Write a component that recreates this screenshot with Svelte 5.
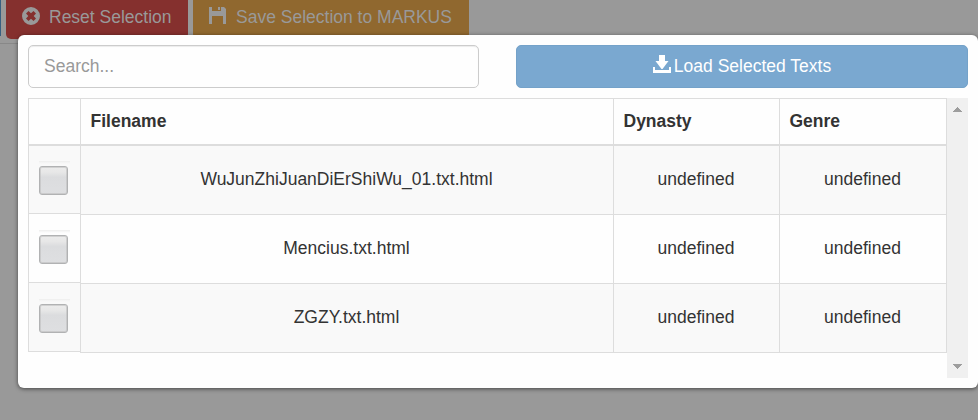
<script>
  const files = ['WuJunZhiJuanDiErShiWu_01.txt.html', 'Mencius.txt.html', 'ZGZY.txt.html'];
</script>

<div class="page">
  <div class="toolbar">
    <span class="btn blue"></span>
    <span class="btn red">
      <svg width="18" height="18" viewBox="0 0 18 18"><path fill-rule="evenodd" d="M9 0a9 9 0 1 0 0 18A9 9 0 0 0 9 0ZM6.500 4 9 6.300 11.500 4 14 6.500 11.700 9 14 11.500 11.500 14 9 11.700 6.500 14 4 11.500 6.300 9 4 6.500Z" /></svg>
      <span>Reset Selection</span>
    </span>
    <span class="btn orange">
      <svg width="17" height="17" viewBox="0 0 17 17"><path d="M0 0h3v4h9V0h3l2 2v15h-3V9H3v8H0ZM9 0h2v3H9Z" /></svg>
      <span>Save Selection to MARKUS</span>
    </span>
  </div>

  <div class="modal">
    <div class="controls">
      <input type="text" placeholder="Search..." />
      <button>
        <svg width="18" height="18" viewBox="0 0 18 18"><path d="M6 0h6v6h3.500L9.500 14h-1L2.500 6H6ZM0 12h2v3h14v-3h2v6H0Z" /></svg>
        <span>Load Selected Texts</span>
      </button>
    </div>
    <div class="scroller">
      <div class="checks">
        <div class="head"></div>
        {#each files as file}
          <label class="check" aria-label={file}><span class="strip"><i></i></span></label>
        {/each}
      </div>
      <div class="table">
        <div class="row head"><b>Filename</b><b>Dynasty</b><b>Genre</b></div>
        {#each files as file}
          <div class="row"><span>{file}</span><span>undefined</span><span>undefined</span></div>
        {/each}
      </div>
      <div class="bar">
        <svg width="9" height="5" viewBox="0 0 9 5" shape-rendering="crispEdges"><path d="M4 0h1v1h1v1h1v1h1v1h1v1H0V4h1V3h1V2h1V1h1Z" /></svg>
        <svg width="9" height="5" viewBox="0 0 9 5" shape-rendering="crispEdges"><path d="M0 0h9v1H8v1H7v1H6v1H5v1H4V4H3V3H2V2H1V1H0Z" /></svg>
      </div>
    </div>
  </div>
</div>

<style>
  :global(body) { overflow: hidden; }
  * { box-sizing: border-box; }
  .page {
    width: 978px; height: 420px; overflow: hidden; position: relative;
    background: #999;
    font: 17.5px/25px "Liberation Sans", Arial, sans-serif; color: #333;
  }
  .toolbar { display: flex; align-items: flex-start; height: 44px; border-bottom: 1px solid #888; }
  .btn { display: flex; height: 39px; color: #999; white-space: nowrap; border-radius: 0 0 5px 5px; }
  .btn svg { flex: none; fill: #999; }
  .blue { width: 1px; height: 36px; margin-right: 5px; background: #385f80; border-radius: 0; }
  .red { width: 182px; margin-right: 5px; padding: 5px 0 0 16px; background: #85302e; }
  .red svg { margin: 2px 9px 0 0; }
  .orange { width: 276px; padding: 5px 0 0 16px; background: #90682f; }
  .orange svg { margin: 2px 10px 0 0; }
  .modal {
    position: absolute; left: 18px; top: 35px; width: 960px; height: 353px; padding: 10px;
    background: #fefefe; border-radius: 6px; box-shadow: 0 1px 4px rgba(0, 0, 0, .55);
  }
  .controls { display: flex; justify-content: space-between; height: 43px; margin-bottom: 10px; }
  input {
    width: 451px; height: 43px; padding: 0 15px; border: 1px solid #ccc; border-radius: 5px;
    background: #fefefe; font: inherit; box-shadow: inset 0 1px 1px rgba(0, 0, 0, .075);
  }
  input::placeholder { color: #999; opacity: 1; }
  button {
    display: flex; justify-content: center; align-items: center; gap: 3px; width: 452px; padding: 0;
    border: 1px solid #74a2c9; border-radius: 5px; background: #7aa8d0; color: #fff; font: inherit;
  }
  button svg { fill: #fff; margin-top: -5px; }
  .scroller { display: flex; align-items: flex-start; height: 280px; }
  .checks { width: 52px; border-left: 1px solid #ddd; }
  .head { height: 48px; border-top: 1px solid #ddd; border-bottom: 2px solid #ddd; }
  .check { display: flex; justify-content: flex-start; height: 69px; padding: 16px 0 0 10px; border-bottom: 1px solid #ddd; }
  .check:nth-child(2) { height: 68px; padding-top: 15px; }
  .check:nth-child(even), .row:nth-child(even) { background: #f9f9f9; }
  .strip {
    width: 31px; height: 42px; padding-top: 5px;
    background: linear-gradient(#ededec, #f3f3f3 1px, rgba(250, 250, 250, 0) 3px);
  }
  .strip i {
    display: block; width: 29px; height: 29px; border: 1px solid #b1b2b3; border-radius: 3px;
    background: linear-gradient(#ececec 0, #e7e7e7 20%, #dbdcde 38%, #dedfe1 100%);
    box-shadow: inset 0 0 0 1px #b9baba88;
  }
  .table { width: 867px; border-right: 1px solid #ddd; }
  .row { display: grid; grid-template-columns: 533px 166px 167px; height: 69px; border-bottom: 1px solid #ddd; }
  .row > * { border-left: 1px solid #ddd; }
  .row > span { padding: 21px 1px 0 0; text-align: center; }
  .row.head { height: 48px; border-bottom-width: 2px; }
  .row b { padding: 10px 9.500px; }
  .bar {
    display: flex; flex-direction: column; justify-content: space-between; align-items: center;
    width: 21px; height: 280px; padding: 9px 0; background: #f0f0f0;
  }
  .bar svg { fill: #9d9d9d; }
</style>
